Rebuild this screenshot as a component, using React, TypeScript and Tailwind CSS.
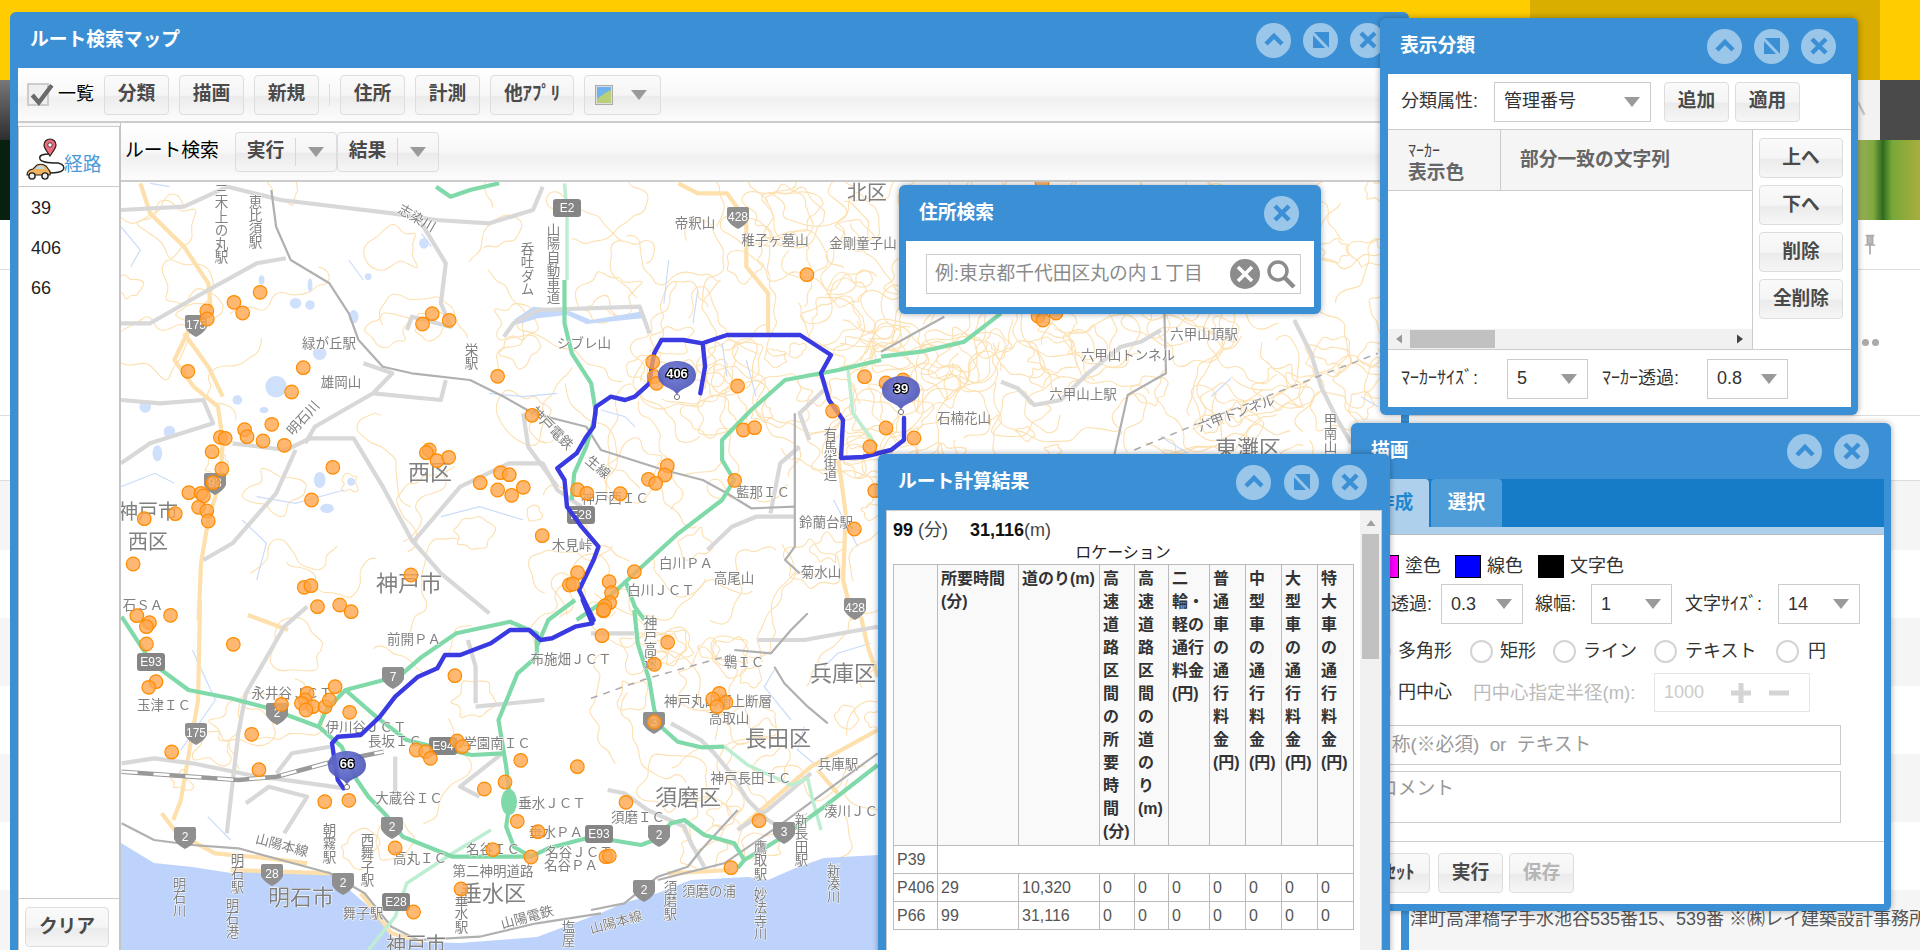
import type { ReactNode } from "react";

// map coordinates were read from crops, each crop has its own scale
const conv = (p: number[], ox: number, oy: number, sx: number, sy: number) => {
  const out: string[] = [];
  for (let i = 0; i < p.length; i += 2) out.push(`${(ox + p[i] * sx).toFixed(1)},${(oy + p[i + 1] * sy).toFixed(1)}`);
  return out.join(" ");
};
const a = (...p: number[]) => conv(p, 120, 180, 1 / 2.063, 1 / 3);
const b = (...p: number[]) => conv(p, 0, 600, 1 / 2.613, 1 / 3);
const c = (...p: number[]) => conv(p, 590, 610, 1 / 3, 1 / 3);
const d = (...p: number[]) => conv(p, 1000, 310, 1 / 3, 1 / 3);

const grayRoads = [
  a(0, 90, 130, 80, 220, 20, 330, 60, 560, 100, 650, 120, 760, 130, 850, 90, 870, 20),
  a(620, 130, 670, 250, 660, 370, 680, 440, 600, 410, 590, 450),
  a(0, 430, 60, 430, 180, 330, 280, 250, 340, 235),
  a(0, 660, 80, 670, 170, 660, 190, 730, 60, 790, 0, 850),
  a(230, 790, 340, 810, 390, 775, 480, 775, 540, 920, 600, 1080, 660, 1180, 760, 1300),
  a(360, 810, 320, 940, 230, 1090, 170, 1140),
  a(600, 1090, 700, 920, 800, 850, 870, 850, 900, 930, 950, 980),
  a(500, 550, 560, 580, 520, 640, 400, 740, 380, 790),
  a(520, 640, 660, 660, 670, 600),
  a(790, 470, 810, 430, 860, 390, 1070, 380, 1090, 460),
  a(830, 700, 840, 800, 900, 920),
  a(1210, 1110, 1260, 1040, 1310, 1010, 1390, 1010),
  a(1400, 800, 1360, 850, 1340, 1000),
  a(1450, 630, 1400, 700, 1420, 780),
  b(315, 490, 400, 475, 500, 490, 650, 525),
  b(650, 525, 900, 565),
  b(590, 700, 620, 400, 640, 280, 740, 80, 800, 20),
  b(720, 520, 760, 460, 860, 440),
  b(1240, 310, 1240, 200, 1220, 120),
  b(1240, 320, 1420, 300),
  b(1030, 470, 1030, 590),
  b(640, 610, 700, 560, 800, 590, 740, 700),
  b(1250, 590, 1200, 560, 1310, 460),
  c(240, 340, 330, 390, 370, 430, 420, 490, 470, 570, 530, 630, 580, 660),
  c(50, 540, 100, 550, 170, 600, 280, 650, 300, 700, 340, 770),
  c(500, 90, 640, 90, 860, 50),
  c(0, 70, 130, 70),
  c(440, 660, 530, 600, 660, 490),
  d(0, 215, 50, 235, 100, 285, 180, 270, 260, 190, 360, 110, 420, 95, 480, 60),
  d(880, 30, 930, 130, 960, 230, 1010, 330, 1050, 400),
];
const darkLines = [
  a(310, 30, 320, 140, 350, 240, 430, 310, 470, 400, 490, 480, 540, 560, 600, 580, 720, 600, 790, 650, 850, 700, 960, 740, 990, 810, 1120, 870, 1200, 900, 1250, 940, 1300, 985, 1390, 980),
  a(1390, 700, 1390, 1100, 1370, 1140, 1400, 1180),
  b(315, 670, 400, 720, 500, 735, 620, 745, 860, 820, 950, 880, 1020, 980, 1090, 1020, 1250, 1010, 1400, 970, 1568, 940),
  c(0, 900, 100, 880, 200, 800, 290, 770, 330, 720, 440, 600),
  c(550, 170, 580, 220, 650, 290, 710, 340),
  c(430, 120, 540, 130, 600, 60, 650, 10),
  c(200, 810, 400, 760, 560, 650, 860, 430),
  d(490, 0, 495, 190, 380, 255, 340, 435),
  conv([0, 545, 100, 490, 190, 440], 880, 170, 1 / 3, 1 / 3),
];
const orangeRoads = [
  a(40, 10, 60, 100, 130, 200, 180, 310, 185, 380, 140, 450, 110, 540, 150, 620, 200, 680, 210, 780, 205, 900, 180, 1020, 165, 1150, 160, 1320),
  a(130, 460, 180, 560, 210, 650),
  a(1150, 10, 1190, 40, 1250, 40, 1290, 120, 1290, 260, 1335, 340, 1335, 460),
  a(1480, 840, 1495, 1000, 1490, 1200, 1510, 1320),
  b(520, 0, 515, 300, 470, 600, 450, 660),
  b(645, 45, 750, 90),
  b(420, 640, 460, 700, 560, 760, 700, 775, 800, 790),
  b(600, 810, 860, 820),
  b(940, 880, 1020, 1000, 1100, 1025),
  c(230, 790, 420, 780),
  c(440, 660, 660, 470, 860, 360),
  c(680, 480, 740, 550),
  c(810, 20, 830, 110, 860, 200),
];
const greenRoads = [
  a(915, 300, 915, 430, 930, 520, 970, 610, 980, 700, 960, 800, 935, 880, 930, 960),
  a(650, 20, 680, 50, 720, 30, 780, 10),
  a(1568, 540, 1480, 570, 1370, 600, 1300, 690, 1240, 780, 1240, 840, 1265, 900, 1240, 960, 1150, 1060, 1060, 1180, 1000, 1260, 940, 1320),
  a(1040, 1200, 1060, 1280, 1080, 1320),
  b(315, 50, 395, 190, 490, 270, 600, 295, 700, 325, 830, 380, 890, 440, 930, 540, 960, 590, 1010, 650, 1050, 710, 1180, 770, 1280, 770, 1385, 770, 1430, 745, 1530, 715, 1568, 710),
  b(830, 380, 850, 330, 900, 270, 1000, 240, 1040, 230, 1100, 170, 1190, 100, 1330, 65, 1400, 100, 1400, 170, 1350, 220, 1300, 360, 1320, 500, 1330, 600, 1320, 680, 1340, 740, 1385, 770),
  b(900, 270, 980, 350, 1060, 420, 1130, 440, 1230, 465, 1310, 460),
  b(1400, 140, 1430, 60, 1500, 0),
  c(130, 0, 140, 100, 175, 210, 190, 300, 210, 350, 260, 395, 330, 412, 400, 410),
  c(60, 690, 150, 705, 190, 690, 240, 640, 280, 630, 340, 675, 430, 700, 460, 750, 440, 775),
  c(460, 750, 560, 690, 700, 590, 860, 465),
  conv([0, 560, 120, 545, 250, 515, 360, 430], 880, 170, 1 / 3, 1 / 3),
];
const paleGreenRoads = [
  a(915, 10, 920, 100, 920, 300),
  a(1500, 570, 1510, 700, 1560, 800),
  b(1280, 690, 1180, 760, 1060, 850, 1030, 950, 960, 1050),
  c(400, 410, 470, 465, 600, 525, 650, 505, 665, 570, 690, 660),
];
const rivers = [
  a(0, 140, 40, 210, 20, 260),
  a(100, 20, 60, 10),
  a(470, 240, 500, 300),
  a(620, 160, 640, 200),
  a(1190, 330, 1180, 430),
  a(1290, 540, 1310, 650),
  a(1240, 490, 1250, 590),
  a(990, 690, 1040, 710, 1060, 740),
  a(1130, 240, 1120, 370),
  a(1470, 960, 1520, 1100),
  a(760, 640, 830, 650, 900, 640),
  a(0, 920, 70, 880, 110, 910),
  a(250, 1020, 300, 1090, 280, 1200),
  a(460, 930, 360, 970, 280, 950),
  a(660, 1010, 740, 980, 830, 1020),
  b(500, 150, 560, 300, 470, 450),
  b(540, 650, 600, 720),
  c(550, 180, 520, 230, 600, 330),
  c(640, 350, 620, 420, 680, 470),
  c(840, 100, 740, 130, 700, 170),
  d(630, 260, 690, 205),
  d(480, 380, 560, 430),
  d(1080, 260, 1130, 290),
];
const ponds: number[][] = [
  [390, 315, 5, 20], [360, 370, 12, 16], [390, 375, 10, 14], [290, 300, 6, 14], [320, 620, 22, 32], [410, 520, 14, 20], [240, 660, 10, 14],
  [50, 680, 12, 18], [100, 755, 12, 18], [75, 820, 10, 24], [410, 900, 12, 24], [425, 985, 14, 14], [475, 905, 8, 12], [480, 410, 10, 20], [625, 190, 10, 16],
  [510, 290, 7, 10], [295, 690, 9, 9],
];
const lake = a(810, 420, 850, 380, 920, 390, 970, 420, 1070, 395, 1075, 415, 960, 432, 920, 405, 860, 415, 820, 432);
const routeUpper = a(1195, 640, 1205, 560, 1200, 490, 1160, 480, 1115, 480, 1100, 520, 1095, 560, 1090, 610, 1060, 650, 1040, 660, 1010, 650, 980, 680, 975, 740, 960, 770, 940, 820, 900, 865, 915, 900, 920, 980, 950, 1040, 985, 1100, 975, 1140, 945, 1230, 975, 1320);
const routeRight = "702,343 726,335 765,335 799,335 830,355 820,373 828,400 842,420 840,458 862,457 890,450 903,440 903,418";
const routeLower = b(1520, 0, 1545, 70, 1500, 80, 1440, 115, 1410, 120, 1380, 90, 1330, 90, 1280, 130, 1200, 165, 1160, 165, 1140, 205, 1090, 230, 1030, 290, 990, 350, 940, 405, 880, 410, 865, 430, 870, 470, 880, 540, 895, 565);

const dotsA = [287,337,233,367,251,399,177,393,178,417,642,401,622,432,677,421,376,563,138,574,352,636,777,589,1415,284,1272,618,1097,546,1100,590,1105,610,848,706,1468,693,1284,750,1307,743,255,749,260,770,311,733,293,783,337,796,205,772,215,775,188,815,208,867,190,908,140,938,165,940,170,948,160,982,177,993,180,1023,112,1001,48,1016,25,1152,437,862,393,960,636,810,630,818,652,842,676,832,783,878,801,884,741,908,777,930,830,922,806,946,1127,857,1122,885,1088,898,1103,910,1266,901,942,929,961,940,1030,941,1545,800,1534,590,1555,932,1513,1047,869,1067,598,1185,378,1222,392,1217,1059,1175,942,1178,925,1215,932,1212,1007,1205,1012,1238,1008,1268,998,1278,995,1292];
const dotsB = [355,47,443,46,388,68,380,80,380,132,607,133,827,20,885,15,915,35,405,245,386,262,733,313,800,280,795,300,785,310,815,320,797,330,847,320,858,300,873,260,911,337,655,403,446,456,674,509,846,605,909,601,1186,227,1085,450,1110,455,1122,475,1192,423,1205,440,1358,481,1506,500,1263,567,1317,546,1349,664,1403,695,1030,744,1285,749,1385,771,1202,867,1078,936];
const dotsC = [33,77,230,97,190,163,385,250,365,267,405,277,378,290,190,336,105,577,504,632,45,740,55,738,420,773,38,0];
const dotsD = [885,428,913,438,885,383,902,380,1041,183,1037,316,1042,320,1055,313];
const allDots: number[][] = [];
for (let i = 0; i < dotsA.length; i += 2) allDots.push([120 + dotsA[i] / 2.063, 180 + dotsA[i + 1] / 3]);
for (let i = 0; i < dotsB.length; i += 2) allDots.push([dotsB[i] / 2.613, 600 + dotsB[i + 1] / 3]);
for (let i = 0; i < dotsC.length; i += 2) allDots.push([590 + dotsC[i] / 3, 610 + dotsC[i + 1] / 3]);
for (let i = 0; i < dotsD.length; i += 2) allDots.push([dotsD[i], dotsD[i + 1]]);

// contour lines, too many to trace so they are generated
function makeContours() {
  let s = 11;
  const r = () => (s = (s * 16807) % 2147483647) / 2147483647;
  const areas = [
    [600, 182, 1401, 470, 210],
    [120, 182, 600, 470, 26],
    [120, 470, 600, 850, 22],
    [600, 470, 880, 850, 50],
  ];
  const smooth = (pts: number[][], closed: boolean) => {
    let path = "";
    const last = closed ? pts.length : pts.length - 1;
    for (let k = 0; k < last; k++) {
      const p = pts[k];
      const q = pts[(k + 1) % pts.length];
      const mid = `${((p[0] + q[0]) / 2).toFixed(1)} ${((p[1] + q[1]) / 2).toFixed(1)}`;
      path += k === 0 ? `M${mid}` : ` Q${p[0].toFixed(1)} ${p[1].toFixed(1)} ${mid}`;
    }
    return closed ? path + "Z" : path;
  };
  const out: string[] = [];
  for (const [x0, y0, x1, y1, n] of areas) {
    for (let i = 0; i < n; i++) {
      const cx = x0 + r() * (x1 - x0);
      const cy = y0 + r() * (y1 - y0);
      const pts: number[][] = [];
      if (i % 2 === 0) {
        const base = 8 + r() * 26;
        for (let k = 0; k < 15; k++) {
          const ang = (k / 15) * Math.PI * 2;
          const rad = base * (0.5 + r() * 0.9);
          pts.push([cx + Math.cos(ang) * rad, cy + Math.sin(ang) * rad * 0.85]);
        }
        out.push(smooth(pts, true));
      } else {
        // meandering open line
        let x = cx;
        let y = cy;
        let ang = r() * Math.PI * 2;
        for (let k = 0; k < 16; k++) {
          ang += (r() - 0.5) * 2.4;
          x += Math.cos(ang) * 10;
          y += Math.sin(ang) * 10;
          pts.push([x, y]);
        }
        out.push(smooth(pts, false));
      }
    }
  }
  return out;
}
const contours = makeContours();

type L = [number, number, string, number?, number?, boolean?];
const labels: L[] = [
  [219, 183, "三木上の丸駅", 13.5, 0, true], [253, 195, "恵比須駅", 13.5, 0, true], [416, 218, "志染川", 13.5, 30], [551, 223, "山陽自動車道", 13.5, 0, true], [525, 242, "呑吐ダム", 13.5, 0, true],
  [694, 223, "帝釈山"], [774, 240, "稚子ヶ墓山"], [862, 243, "金剛童子山"], [866, 193, "北区", 20], [583, 343, "シブレ山"], [469, 343, "栄駅", 13.5, 0, true], [328, 343, "緑が丘駅"],
  [340, 382, "雄岡山"], [302, 418, "明石川", 13.5, -48], [551, 428, "神戸電鉄", 13.5, 45], [597, 467, "生線", 13.5, 40], [828, 427, "有馬街道", 13.5, 0, true], [762, 492, "藍那ＩＣ"], [825, 522, "鈴蘭台駅"],
  [614, 498, "神戸西ＩＣ"], [429, 472, "西区", 22], [408, 583, "神戸市", 22], [147, 512, "神戸市", 20], [147, 542, "西区", 20], [685, 563, "白川ＰＡ"], [660, 590, "白川ＪＣＴ"], [733, 578, "高尾山"],
  [820, 572, "菊水山"], [571, 545, "木見峠"], [142, 605, "石ＳＡ"], [291, 693, "永井谷ＪＣＴ"], [163, 705, "玉津ＩＣ"], [413, 639, "前開ＰＡ"], [365, 727, "伊川谷ＪＣＴ"], [394, 741, "長坂ＩＣ"],
  [570, 659, "布施畑ＪＣＴ"], [408, 798, "大蔵谷ＩＣ"], [496, 743, "学園南ＩＣ"], [551, 803, "垂水ＪＣＴ"], [555, 832, "垂水ＰＡ"], [492, 849, "名谷ＩＣ"], [578, 852, "名谷ＪＣＴ"], [570, 865, "名谷ＰＡ"],
  [419, 858, "高丸ＩＣ"], [492, 871, "第二神明道路"], [492, 893, "垂水区", 22], [300, 897, "明石市", 22], [281, 845, "山陽本線", 13.5, 15], [327, 823, "朝霧駅", 13.5, 0, true], [365, 833, "西舞子駅", 13.5, 0, true],
  [235, 853, "明石駅", 13.5, 0, true], [230, 898, "明石港", 13.5, 0, true], [177, 877, "明石川", 13.5, 0, true], [362, 913, "舞子駅"], [526, 917, "山陽電鉄", 13.5, -15], [415, 945, "神戸市", 20], [459, 893, "垂水駅", 13.5, 0, true], [566, 920, "塩屋", 13.5, 0, true],
  [743, 662, "鵯ＩＣ"], [842, 673, "兵庫区", 22], [717, 701, "神戸丸山衝上断層"], [728, 718, "高取山"], [777, 738, "長田区", 22], [750, 778, "神戸長田ＩＣ"], [837, 764, "兵庫駅"], [687, 797, "須磨区", 22], [637, 817, "須磨ＩＣ"],
  [850, 811, "湊川ＪＣ"], [799, 813, "新長田駅", 13.5, 0, true], [758, 840, "鷹取駅", 13.5, 0, true], [708, 891, "須磨の浦"], [668, 880, "須磨駅", 13.5, 0, true], [758, 887, "妙法寺川", 13.5, 0, true], [831, 863, "新湊川", 13.5, 0, true],
  [615, 922, "山陽本線", 13.5, -15], [648, 615, "神戸高速", 13.5, 0, true], [1203, 334, "六甲山頂駅"], [1127, 355, "六甲山トンネル"], [1082, 394, "六甲山上駅"], [1235, 413, "六甲トンネル", 13.5, -20], [1247, 448, "東灘区", 22], [963, 418, "石楠花山"], [1328, 413, "甲南山", 13.5, 0, true],
];

const shields: [number, number, string, boolean][] = [
  [566, 208, "E2", true], [737, 217, "428", false], [195, 325, "175", false], [195, 733, "175", false], [150, 662, "E93", true], [392, 677, "7", false], [276, 713, "2", false], [442, 746, "E94", true],
  [391, 827, "2", false], [184, 837, "2", false], [271, 874, "28", false], [342, 883, "2", false], [395, 902, "E28", true], [580, 515, "E28", true], [214, 483, "93", false], [854, 608, "428", false],
  [653, 722, "3", false], [598, 834, "E93", true], [658, 835, "2", false], [783, 832, "3", false], [643, 890, "2", false],
];

const Marker = ({ x, y, text }: { x: number; y: number; text: string }) => (
  <g transform={`translate(${x} ${y})`}>
    <path d="M0,-3 C-3,-11 -19,-10 -19,-23 C-19,-33 -8,-37 0,-37 C8,-37 19,-33 19,-23 C19,-10 3,-11 0,-3Z" fill="url(#pinFill)" opacity="0.92" />
    <circle r="2.6" cy="-1" fill="#fff" stroke="#777" />
    <text y="-20" textAnchor="middle" fontSize="13" fontWeight="700" fill="#fff" stroke="#000" strokeWidth="2.4" paintOrder="stroke">{text}</text>
  </g>
);

const MapArt = () => (
  <svg viewBox="120 182 1281 768" width="1281" height="768" className="block bg-white blur-[0.4px]">
    <defs>
      <radialGradient id="pinFill" cx="0.45" cy="0.35" r="0.7">
        <stop offset="0" stopColor="#6f78d8" />
        <stop offset="1" stopColor="#4650b0" />
      </radialGradient>
    </defs>
    {contours.map((p, i) => <path key={i} d={p} fill="none" stroke="#fde0b0" strokeWidth="1.1" />)}
    <polygon fill="#bdd3fb" points="120,843 153,863 191,867 230,873 268,870 329,873 352,893 375,913 390,937 421,942 459,943 536,937 600,913 623,903 657,893 690,880 747,877 767,880 797,867 823,858 877,855 1000,855 1000,950 120,950" />
    {rivers.map((p, i) => <polyline key={i} points={p} fill="none" stroke="#cbdcfa" strokeWidth="1.2" />)}
    {ponds.map(([x, y, rx, ry], i) => <ellipse key={i} cx={120 + x / 2.063} cy={180 + y / 3} rx={rx / 2.063} ry={ry / 3} fill="#cfe0fc" />)}
    <polygon points={lake} fill="#c4d8f9" />
    {orangeRoads.map((p, i) => <polyline key={i} points={p} fill="none" stroke="#fde0ab" strokeWidth="4.2" strokeLinejoin="round" />)}
    {grayRoads.map((p, i) => <polyline key={i} points={p} fill="none" stroke="#d8d8d8" strokeWidth="4.2" strokeLinejoin="round" />)}
    {darkLines.map((p, i) => <polyline key={i} points={p} fill="none" stroke="#b0b0b0" strokeWidth="2.2" strokeLinejoin="round" />)}
    <polyline points={b(315, 515, 500, 530, 620, 540, 720, 530, 850, 490, 1000, 455)} fill="none" stroke="#999" strokeWidth="4.5" />
    <polyline points={b(315, 515, 500, 530, 620, 540, 720, 530, 850, 490, 1000, 455)} fill="none" stroke="#fff" strokeWidth="2.5" strokeDasharray="16 16" />
    <polyline points={c(0, 265, 170, 205, 420, 135)} fill="none" stroke="#aaa" strokeWidth="1.5" strokeDasharray="7 6" />
    <polyline points={d(400, 420, 640, 320, 1130, 130)} fill="none" stroke="#aaa" strokeWidth="1.5" strokeDasharray="7 6" />
    {paleGreenRoads.map((p, i) => <polyline key={i} points={p} fill="none" stroke="#bdeed2" strokeWidth="3.5" strokeLinejoin="round" />)}
    {greenRoads.map((p, i) => <polyline key={i} points={p} fill="none" stroke="#80d9a8" strokeWidth="4.2" strokeLinejoin="round" />)}
    <ellipse cx="508" cy="802" rx="8" ry="13" fill="#80d9a8" />
    {shields.map(([x, y, t, wide], i) => (
      <g key={i} transform={`translate(${x} ${y})`}>
        {wide ? <rect x="-14" y="-9" width="28" height="18" rx="3" fill="#858585" /> : <path d="M-9,-10 H9 Q11,-10 11,-8 V2 Q8,8 0,12 Q-8,8 -11,2 V-8 Q-11,-10 -9,-10Z" fill="#8f8f8f" />}
        <text y="4" textAnchor="middle" fontSize="12" fill="#fff">{t}</text>
      </g>
    ))}
    {labels.map(([x, y, t, s = 13.5, rot = 0, vert = false], i) => (
      <text key={i} x={x} y={vert ? y : y + s * 0.36} fontSize={s} fill="#808080" stroke="#fff" strokeWidth="1" paintOrder="stroke" textAnchor={vert ? "start" : "middle"}
        transform={rot ? `rotate(${rot} ${x} ${y})` : undefined} className={vert ? "[writing-mode:vertical-rl]" : ""}>{t}</text>
    ))}
    {[routeUpper, routeRight, routeLower].map((p, i) => <polyline key={i} points={p} fill="none" stroke="#3a3ae2" strokeWidth="4.4" strokeLinejoin="round" strokeLinecap="round" />)}
    {allDots.map(([x, y], i) => <circle key={i} cx={x} cy={y} r="6.8" fill="#ffa64d" fillOpacity="0.8" stroke="#ff8c00" strokeWidth="1.2" />)}
    <Marker x={676} y={398} text="406" />
    <Marker x={900} y={413} text="39" />
    <Marker x={346} y={788} text="66" />
  </svg>
);

const Circle = ({ children, className = "" }: { children: ReactNode; className?: string }) => (
  <div className={`flex h-[35px] w-[35px] items-center justify-center rounded-full bg-[#9ac6e9] ${className}`}>{children}</div>
);
const UpIcon = () => (
  <svg viewBox="0 0 24 24" className="h-[24px] w-[24px]"><path d="M4 16 L12 8 L20 16" fill="none" stroke="#3b90d5" strokeWidth="4.5" /></svg>
);
const RestoreIcon = () => (
  <svg viewBox="0 0 24 24" className="h-[24px] w-[24px]">
    <rect x="4" y="4" width="16" height="16" fill="#3b90d5" />
    <path d="M2 3 L20 22" stroke="#9ac6e9" strokeWidth="3" />
  </svg>
);
const CloseIcon = ({ color = "#3b90d5" }: { color?: string }) => (
  <svg viewBox="0 0 24 24" className="h-[24px] w-[24px]"><path d="M5 5 L19 19 M19 5 L5 19" stroke={color} strokeWidth="4.5" /></svg>
);

const btn = "flex items-center justify-center rounded-[4px] border border-[#ddd] bg-[linear-gradient(#fafafa,#f5f5f5_50%,#ebebeb_54%,#f6f6f6)] text-[18.75px] font-bold text-[#4a4a4a]";
const Btn = ({ children, className = "" }: { children: ReactNode; className?: string }) => <div className={`${btn} ${className}`}>{children}</div>;

const Arrow = ({ className = "" }: { className?: string }) => (
  <svg viewBox="0 0 16 10" className={`h-[10px] w-[16px] ${className}`}><path d="M0 0 H16 L8 10Z" fill="#9a9a9a" /></svg>
);

const Sel = ({ text, className = "" }: { text: string; className?: string }) => (
  <div className={`flex h-[40px] items-center justify-between border border-[#ccc] bg-white pl-[9px] pr-[10px] text-[#333] ${className}`}>
    <span>{text}</span>
    <Arrow />
  </div>
);

const Radio = () => <span className="h-[23px] w-[23px] rounded-full border-2 border-[#d4d4d4] bg-white" />;

const SplitBtn = ({ text }: { text: string }) => (
  <div className={`${btn} h-[40px] w-[102px] justify-start`}>
    <span className="flex h-[28px] w-[60px] items-center justify-center border-r border-[#d8d8d8]">{text}</span>
    <Arrow className="ml-[12px]" />
  </div>
);

const toolbar = "bg-[linear-gradient(#fff,#f8f8f8_50%,#f0f0f0_58%,#fcfcfc)]";

const MainWindow = () => (
  <div className="absolute left-[10px] top-[12px] z-10 flex h-[950px] w-[1399px] flex-col rounded-t-[6px] bg-[#3b90d5] px-[8px]">
    <div className="flex h-[56px] shrink-0 items-center pl-[12px] text-[18.75px] font-bold text-white">
      ルート検索マップ
      <div className="ml-auto flex gap-[12px] pr-[16px]">
        <Circle><UpIcon /></Circle>
        <Circle><RestoreIcon /></Circle>
        <Circle><CloseIcon /></Circle>
      </div>
    </div>
    <div className={`flex h-[55px] shrink-0 items-center border-b-2 border-[#ccc] pl-[9px] ${toolbar}`}>
      <div className="relative h-[23px] w-[22px] border-2 border-[#ccc] bg-[#efefef]">
        <svg viewBox="0 0 24 24" className="absolute left-[-1px] top-[-3px] h-[26px] w-[26px]"><path d="M4 12 L10 19 L22 3" fill="none" stroke="#6a6a6a" strokeWidth="4" /></svg>
      </div>
      <span className="ml-[9px] w-[46px] text-black">一覧</span>
      <Btn className="h-[40px] w-[65px]">分類</Btn>
      <Btn className="ml-[10px] h-[40px] w-[65px]">描画</Btn>
      <Btn className="ml-[10px] h-[40px] w-[65px]">新規</Btn>
      <span className="ml-[10px] h-[22px] w-px bg-[#ddd]" />
      <Btn className="ml-[10px] h-[40px] w-[65px]">住所</Btn>
      <Btn className="ml-[10px] h-[40px] w-[65px]">計測</Btn>
      <Btn className="ml-[10px] h-[40px] w-[84px]">他ｱﾌﾟﾘ</Btn>
      <Btn className="ml-[10px] h-[40px] w-[77px] justify-start pl-[10px]">
        <svg viewBox="0 0 18 20" className="h-[20px] w-[18px]">
          <rect x="0.5" y="0.5" width="17" height="19" fill="#ddd" stroke="#aaa" />
          <rect x="2" y="2" width="14" height="16" fill="#6fb2ee" />
          <path d="M2 18 L2 14 L10 8 L16 5 L16 18Z" fill="#b9cf78" />
        </svg>
        <Arrow className="ml-[18px]" />
      </Btn>
    </div>
    <div className="flex min-h-0 flex-1 bg-[#f8f8f8]">
      <div className="mt-[3px] flex w-[102px] shrink-0 flex-col border-x border-[#c4c4c4] bg-white">
        <div className="flex h-[61px] items-end border-y border-[#ccc] bg-white pb-[8px] pl-[7px] text-[#4a9ad8]">
          <svg viewBox="0 0 42 44" className="mb-[-6px] h-[48px] w-[42px] shrink-0">
            <path d="M24 16 Q12 16 14 21 Q15 25 32 25 Q40 27 37 32 Q34 35 24 35" fill="none" stroke="#222" strokeWidth="1.4" />
            <path d="M24 18 C20 12 18 10 18 7 A6 6 0 0 1 30 7 C30 10 28 12 24 18Z" fill="#ef6b7c" stroke="#222" strokeWidth="1.2" />
            <circle cx="24" cy="7" r="2.2" fill="#fff" stroke="#222" strokeWidth="0.8" />
            <path d="M1 37 Q1 32 7 31 L11 27 Q16 25 20 28 L23 32 Q25 34 24 37Z" fill="#f2b45e" stroke="#222" strokeWidth="1.1" />
            <path d="M9 31 L12 28 H17 L19 31Z" fill="#bcd7e6" />
            <circle cx="6" cy="38" r="3.1" fill="#eee" stroke="#222" strokeWidth="1.4" />
            <circle cx="19" cy="38" r="3.1" fill="#eee" stroke="#222" strokeWidth="1.4" />
          </svg>
          <span className="ml-[-4px] text-[18.75px] leading-[26px]">経路</span>
        </div>
        <div className="flex flex-col pt-[1px] text-[#222]">
          <div className="flex h-[40px] items-center pl-[12px]">39</div>
          <div className="flex h-[40px] items-center pl-[12px]">406</div>
          <div className="flex h-[40px] items-center pl-[12px]">66</div>
        </div>
        <div className="mt-auto flex h-[64px] border-t border-[#ccc] pl-[6px] pt-[8px]">
          <Btn className="h-[40px] w-[84px]">クリア</Btn>
        </div>
      </div>
      <div className="flex min-w-0 flex-1 flex-col border-l border-[#c4c4c4]">
        <div className={`flex h-[59px] shrink-0 items-center border-b-2 border-[#ccc] pl-[4px] ${toolbar}`}>
          <span className="w-[110px] text-[18.75px] text-black">ルート検索</span>
          <SplitBtn text="実行" />
          <SplitBtn text="結果" />
        </div>
        <div className="min-h-0 flex-1 overflow-hidden"><MapArt /></div>
      </div>
    </div>
  </div>
);

const AddressWindow = () => (
  <div className="absolute left-[899px] top-[185px] z-20 flex h-[129px] w-[422px] flex-col rounded-[6px] bg-[#3b90d5] px-[7px] pb-[7px] shadow-[0_0_6px_rgba(0,0,0,0.35)]">
    <div className="flex h-[56px] items-center justify-between pl-[13px] pr-[15px] text-[18.75px] font-bold text-white">
      住所検索
      <Circle><CloseIcon /></Circle>
    </div>
    <div className="flex flex-1 items-center bg-white pl-[20px]">
      <div className="flex h-[40px] w-[375px] items-center border border-[#ccc] pl-[8px] text-[18.75px] text-[#8a8a8a]">
        <span className="w-[295px] whitespace-nowrap">例:東京都千代田区丸の内１丁目</span>
        <svg viewBox="0 0 30 30" className="h-[30px] w-[30px]">
          <circle cx="15" cy="15" r="15" fill="#8c8c8c" />
          <path d="M8 8 L22 22 M22 8 L8 22" stroke="#fff" strokeWidth="3.6" />
        </svg>
        <svg viewBox="0 0 30 30" className="ml-[6px] h-[30px] w-[30px]">
          <circle cx="12" cy="12" r="9" fill="none" stroke="#8c8c8c" strokeWidth="3.5" />
          <path d="M18.5 18.5 L28 28" stroke="#8c8c8c" strokeWidth="4.5" />
        </svg>
      </div>
    </div>
  </div>
);

const CategoryWindow = () => (
  <div className="absolute left-[1380px] top-[18px] z-20 flex h-[397px] w-[478px] flex-col rounded-[6px] bg-[#3b90d5] pb-[8px] pl-[8px] pr-[7px] shadow-[0_0_6px_rgba(0,0,0,0.35)]">
    <div className="flex h-[56px] shrink-0 items-center pl-[12px] text-[18.75px] font-bold text-white">
      表示分類
      <div className="ml-auto flex gap-[12px] pr-[15px]">
        <Circle><UpIcon /></Circle>
        <Circle><RestoreIcon /></Circle>
        <Circle><CloseIcon /></Circle>
      </div>
    </div>
    <div className="flex flex-1 flex-col bg-white">
      <div className="flex h-[56px] shrink-0 items-center border-b border-[#ccc] pl-[13px]">
        <span className="w-[93px] text-[#333]">分類属性:</span>
        <Sel text="管理番号" className="w-[157px]" />
        <Btn className="ml-[13px] h-[40px] w-[65px]">追加</Btn>
        <Btn className="ml-[6px] h-[40px] w-[65px]">適用</Btn>
      </div>
      <div className="flex h-[220px] shrink-0 border-b border-[#ccc]">
        <div className="flex w-[365px] flex-col border-r border-[#ccc]">
          <div className="flex h-[61px] shrink-0 border-b border-[#ccc] bg-[#f5f5f5] font-bold text-[#666]">
            <div className="flex w-[113px] flex-col justify-center border-r border-[#ccc] pl-[20px] pt-[3px] leading-[22px]">
              <span className="text-[16px] font-normal text-[#444]">ﾏｰｶｰ</span>
              <span className="text-[18.75px]">表示色</span>
            </div>
            <div className="flex items-center pl-[19px] text-[18.75px]">部分一致の文字列</div>
          </div>
          <div className="flex-1" />
          <div className="flex h-[20px] items-center bg-[#f1f1f1] pr-[2px]">
            <svg viewBox="0 0 8 12" className="ml-[8px] h-[10px] w-[6px]"><path d="M8 0 V12 L0 6Z" fill="#999" /></svg>
            <div className="ml-[8px] h-[18px] w-[85px] bg-[#c1c1c1]" />
            <svg viewBox="0 0 8 12" className="ml-auto mr-[7px] h-[10px] w-[6px]"><path d="M0 0 V12 L8 6Z" fill="#444" /></svg>
          </div>
        </div>
        <div className="flex flex-col gap-[7px] pl-[6px] pt-[8px]">
          <Btn className="h-[40px] w-[84px]">上へ</Btn>
          <Btn className="h-[40px] w-[84px]">下へ</Btn>
          <Btn className="h-[40px] w-[84px]">削除</Btn>
          <Btn className="h-[40px] w-[84px]">全削除</Btn>
        </div>
      </div>
      <div className="flex flex-1 items-center pl-[13px] text-[#333]">
        <span className="w-[106px]">ﾏｰｶｰｻｲｽﾞ:</span>
        <Sel text="5" className="w-[81px]" />
        <span className="ml-[14px] w-[105px]">ﾏｰｶｰ透過:</span>
        <Sel text="0.8" className="w-[81px]" />
      </div>
    </div>
  </div>
);

const DrawWindow = () => (
  <div className="absolute left-[1351px] top-[423px] z-20 flex h-[488px] w-[540px] flex-col rounded-[6px] bg-[#3b90d5] pb-[7px] pl-[7px] pr-[7px] shadow-[0_0_6px_rgba(0,0,0,0.35)]">
    <div className="flex h-[56px] shrink-0 items-center pl-[13px] text-[18.75px] font-bold text-white">
      描画
      <div className="ml-auto flex gap-[12px] pr-[15px]">
        <Circle><UpIcon /></Circle>
        <Circle><CloseIcon /></Circle>
      </div>
    </div>
    <div className="flex h-[48px] shrink-0 items-end gap-[2px] bg-[#167cc8] pl-[2px] text-[18.75px] font-bold">
      <div className="flex h-[48px] w-[69px] items-center justify-center rounded-t-[4px] bg-[#aed0ec] text-[#1f86d0]">作成</div>
      <div className="flex h-[48px] w-[71px] items-center justify-center rounded-t-[4px] bg-[#4e9cd8] text-white">選択</div>
    </div>
    <div className="h-[8px] shrink-0 border-b border-[#bbb] bg-[#aed0ec]" />
    <div className="flex flex-1 flex-col bg-white text-[#333]">
      <div className="mt-[20px] flex h-[23px] items-center pl-[15px]">
        <span className="h-[23px] w-[26px] border border-black bg-[#f0f]" />
        <span className="ml-[6px] w-[36px]">塗色</span>
        <span className="ml-[14px] h-[23px] w-[26px] border border-black bg-[#00f]" />
        <span className="ml-[6px] w-[36px]">線色</span>
        <span className="ml-[15px] h-[23px] w-[26px] bg-black" />
        <span className="ml-[6px]">文字色</span>
      </div>
      <div className="mt-[6px] flex h-[40px] items-center pl-[15px]">
        <span className="w-[68px]">塗透過:</span>
        <Sel text="0.3" className="w-[82px]" />
        <span className="ml-[12px] w-[56px]">線幅:</span>
        <Sel text="1" className="w-[81px]" />
        <span className="ml-[13px] w-[93px]">文字ｻｲｽﾞ:</span>
        <Sel text="14" className="w-[82px]" />
      </div>
      <div className="mt-[7px] flex h-[40px] items-center pl-[10px]">
        <Radio />
        <span className="ml-[7px] w-[72px]">多角形</span>
        <Radio />
        <span className="ml-[7px] w-[53px]">矩形</span>
        <Radio />
        <span className="ml-[7px] w-[71px]">ライン</span>
        <Radio />
        <span className="ml-[8px] w-[91px]">テキスト</span>
        <Radio />
        <span className="ml-[9px]">円</span>
      </div>
      <div className="mt-[2px] flex h-[39px] items-center pl-[10px]">
        <Radio />
        <span className="ml-[7px] w-[75px]">円中心</span>
        <span className="w-[181px] whitespace-nowrap text-[18.5px] text-[#bbb]">円中心指定半径(m):</span>
        <div className="flex h-[39px] w-[156px] items-center border border-[#e6e6e6] pl-[9px] text-[#ccc]">
          <span className="w-[66px]">1000</span>
          <svg viewBox="0 0 22 22" className="h-[22px] w-[22px]"><path d="M11 1 V21 M1 11 H21" stroke="#d4d4d4" strokeWidth="5" /></svg>
          <svg viewBox="0 0 22 22" className="ml-[16px] h-[22px] w-[22px]"><path d="M1 11 H21" stroke="#d4d4d4" strokeWidth="5" /></svg>
        </div>
      </div>
      <div className="ml-[7px] mt-[13px] flex h-[40px] w-[476px] items-center border border-[#ccc] pl-[7px] text-[18.75px] text-[#999]">名称(※必須)&nbsp;&nbsp;or&nbsp;&nbsp;テキスト</div>
      <div className="ml-[7px] mt-[6px] h-[52px] w-[476px] border border-[#ccc] pl-[13px] pt-[3px] text-[18.75px] text-[#999]">コメント</div>
      <div className="mt-[18px] flex h-[63px] items-start gap-[6px] border-t border-[#ccc] pl-[4px] pt-[11px]">
        <Btn className="h-[40px] w-[68px]">ﾘｾｯﾄ</Btn>
        <Btn className="ml-[2px] h-[40px] w-[65px]">実行</Btn>
        <Btn className="h-[40px] w-[65px] text-[#b5b5b5]">保存</Btn>
      </div>
    </div>
  </div>
);

const heads = ["", "所要時間(分)", "道のり(m)", "高速道路区間の所要時間(分)", "高速道路区間の道のり(m)", "二輪・軽の通行料金(円)", "普通車の通行料金(円)", "中型車の通行料金(円)", "大型車の通行料金(円)", "特大車の通行料金(円)"];
const widths = ["w-[44px]", "w-[81px]", "w-[81px]", "w-[35px]", "w-[34px]", "w-[41px]", "w-[36px]", "w-[36px]", "w-[36px]", "w-[36px]"];
const rows = [
  ["P406", "29", "10,320", "0", "0", "0", "0", "0", "0", "0"],
  ["P66", "99", "31,116", "0", "0", "0", "0", "0", "0", "0"],
];
const cell = "border border-[#bbb] px-[3px] align-middle text-[#555]";

const ResultWindow = () => (
  <div className="absolute left-[878px] top-[454px] z-30 flex h-[520px] w-[512px] flex-col rounded-t-[6px] bg-[#3b90d5] px-[8px] shadow-[0_0_6px_rgba(0,0,0,0.35)]">
    <div className="flex h-[56px] shrink-0 items-center pl-[12px] text-[18.75px] font-bold text-white">
      ルート計算結果
      <div className="ml-auto flex gap-[13px] pr-[15px]">
        <Circle><UpIcon /></Circle>
        <Circle><RestoreIcon /></Circle>
        <Circle><CloseIcon /></Circle>
      </div>
    </div>
    <div className="flex flex-1 border border-[#ccc] bg-white">
      <div className="w-[474px] pl-[6px]">
        <div className="mt-[7px] flex h-[24px] items-center text-[18px] text-[#444]">
          <b className="text-[#111]">99</b>&nbsp;(分)
          <b className="ml-[22px] text-[#111]">31,116</b>(m)
        </div>
        <div className="h-[21px] w-[460px] text-center text-[16px] leading-[21px] text-[#222]">ロケーション</div>
        <table className="mt-[1px] w-[460px] table-fixed border-collapse text-[16px] leading-[23px]">
          <thead>
            <tr className="h-[281px]">
              {heads.map((h, i) => (
                <th key={i} className={`border border-[#bbb] bg-[#f9f9f9] px-[3px] pt-[2px] text-left align-top font-bold text-[#333] ${widths[i]}`}>{h}</th>
              ))}
            </tr>
          </thead>
          <tbody>
            <tr className="h-[28px]">
              <td className={cell}>P39</td>
              <td className={cell} colSpan={9} />
            </tr>
            {rows.map((r) => (
              <tr key={r[0]} className="h-[28px]">
                {r.map((v, i) => <td key={i} className={cell}>{v}</td>)}
              </tr>
            ))}
          </tbody>
        </table>
      </div>
      <div className="ml-[1px] flex w-[21px] flex-col items-center bg-[#f1f1f1] pt-[9px]">
        <svg viewBox="0 0 12 8" className="h-[6px] w-[10px]"><path d="M0 8 H12 L6 0Z" fill="#a0a0a0" /></svg>
        <div className="mt-[8px] h-[125px] w-[17px] bg-[#c1c1c1]" />
      </div>
    </div>
  </div>
);

// what can be seen of the page behind the windows
const PageBehind = () => (
  <div className="flex h-[950px] w-[1920px] flex-col bg-white text-[18px] text-[#555]">
    <div className="flex h-[80px] shrink-0 bg-[#ffcc00]">
      <div className="ml-[1530px] w-[350px] bg-[#d9ae00]" />
    </div>
    <div className="flex h-[60px] shrink-0 justify-between bg-[#f2f2f2]">
      <div className="w-[10px] bg-[linear-gradient(#777,#2e2e2e)]" />
      <div className="flex items-center gap-[14px]">
        <svg viewBox="0 0 10 20" className="h-[20px] w-[8px]"><path d="M0 0 L8 16" stroke="#c4c4c4" strokeWidth="3" /></svg>
        <div className="h-[60px] w-[40px] bg-[#4a4a4a]" />
      </div>
    </div>
    <div className="flex h-[80px] shrink-0 justify-between">
      <div className="w-[10px] bg-[#08200f]" />
      <div className="w-[62px] bg-[linear-gradient(90deg,#9ab25a,#7fa83f_25%,#2e6b1e_40%,#78a838_55%,#a8ae3e)]" />
    </div>
    <div className="flex h-[50px] shrink-0 items-center justify-end border-b border-[#ddd] pr-[44px]">
      <svg viewBox="0 0 14 24" className="h-[22px] w-[12px]"><path d="M2 1 H12 M4 1 V11 H10 V1 M1 12 H13 M7 12 V23" stroke="#aaa" strokeWidth="2" fill="#bbb" /></svg>
    </div>
    <div className="flex h-[146px] shrink-0 items-center justify-end gap-[3px] border-b border-[#ddd] pr-[41px]">
      <span className="h-[7px] w-[7px] rounded-full bg-[#aaa]" />
      <span className="h-[7px] w-[7px] rounded-full bg-[#aaa]" />
    </div>
    <div className="h-[65px] shrink-0 border-b border-[#ddd]" />
    <div className="h-[69px] shrink-0 bg-[#f5f5f5]" />
    <div className="h-[68px] shrink-0" />
    <div className="h-[68px] shrink-0 bg-[#f5f5f5]" />
    <div className="h-[68px] shrink-0" />
    <div className="h-[68px] shrink-0 bg-[#f5f5f5]" />
    <div className="h-[68px] shrink-0" />
    <div className="flex flex-1 items-start whitespace-nowrap bg-[#f5f5f5] pl-[1410px] pt-[17px] leading-[24px]">津町高津橋字手水池谷535番15、539番 ※㈱レイ建築設計事務所</div>
  </div>
);

export default function App() {
  return (
    <div className="relative h-[950px] w-[1920px] overflow-hidden font-['Liberation_Sans','Noto_Sans_CJK_JP',sans-serif] text-[18px]">
      <PageBehind />
      <MainWindow />
      <AddressWindow />
      <CategoryWindow />
      <DrawWindow />
      <ResultWindow />
    </div>
  );
}
